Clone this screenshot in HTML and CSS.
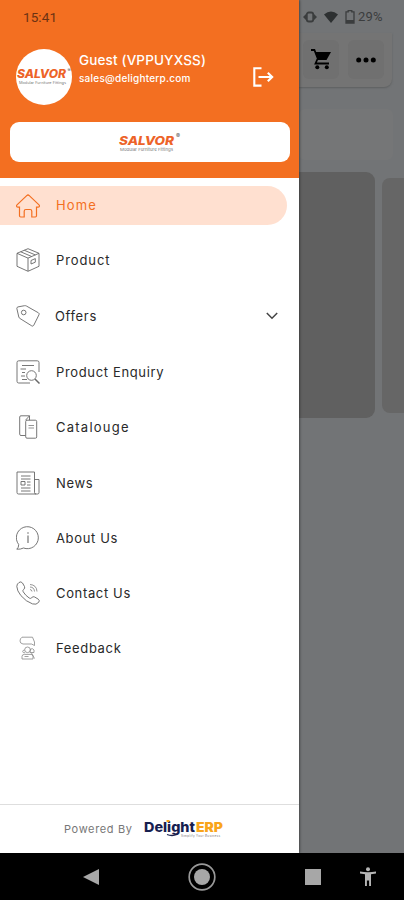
FILE: index.html
```
<!DOCTYPE html>
<html lang="en">
<head>
<meta charset="utf-8">
<meta name="viewport" content="width=device-width, initial-scale=1">
<title>Salvor</title>
<link rel="stylesheet" href="styles.css">
</head>
<body>
<div class="phone">
  <main class="screen">
    <div class="backdrop">
      <div class="status">
        <svg width="14" height="12" viewBox="0 0 14 12"><path d="M3.500 2.500 0 6l3.500 3.500M10.500 2.500 14 6l-3.500 3.500" fill="#3b3d3e"/><rect x="3.800" y="1.500" width="6.400" height="9" rx="2" fill="none" stroke="#3b3d3e" stroke-width="1.800"/></svg>
        <svg width="14" height="12" viewBox="0 0 14 12"><path d="M0 3.500Q7-2.500 14 3.500L7 12Z" fill="#2d3031"/></svg>
        <svg width="10" height="14" viewBox="0 0 10 14"><path d="M3.200 1.800V.7h3.600v1.100H9v11.400H1V1.800Z" fill="none" stroke="#3b3d3e" stroke-width="1.300"/><path d="M1 10h8v3H1z" fill="#3b3d3e"/></svg>
        <span>29%</span>
      </div>
      <div class="toolbar">
        <div class="tool"><svg width="20" height="21" viewBox="0 0 20 21"><path d="M0 1h3.400L7 10h7l3.500-6.500" fill="none" stroke="#000" stroke-width="1.800"/><path d="M4 3h16l-4.500 8H7z" fill="#000"/><path d="m6.500 10-2 4.500H18" fill="none" stroke="#000" stroke-width="1.800"/><circle cx="6.300" cy="18.300" r="2" fill="#000"/><circle cx="15.800" cy="18.300" r="2" fill="#000"/></svg></div>
        <div class="tool"><svg width="20" height="6" viewBox="0 0 20 6"><circle cx="2.700" cy="3" r="2.500"/><circle cx="10" cy="3" r="2.500"/><circle cx="17.300" cy="3" r="2.500"/></svg></div>
      </div>
      <div class="search"></div>
      <div class="slides"><div class="slide"></div><div class="slide next"></div></div>
    </div>
    <aside class="drawer">
      <header class="head">
        <time class="clock">15:41</time>
        <div class="profile">
          <div class="avatar">
            <svg width="56" height="20" viewBox="0 0 56 20"><text class="salvor" x="1" y="11" font-size="11.500" textLength="49" lengthAdjust="spacingAndGlyphs">SALVOR</text><text class="reg" x="51.500" y="4.500" font-size="5">®</text><text class="tag" x="3" y="16.500" font-size="3.500" textLength="47" lengthAdjust="spacingAndGlyphs">Modular Furniture Fittings</text></svg>
          </div>
          <div class="who"><strong>Guest (VPPUYXSS)</strong><span>sales@delighterp.com</span></div>
          <svg class="logout" width="22" height="20" viewBox="0 0 22 20"><path d="M9.500 1.200H2.300v17.400h7.200M6.500 10h13M15.800 5.700 20.200 10l-4.400 4.300" fill="none" stroke="#fff" stroke-width="2.100"/></svg>
        </div>
        <div class="brand">
          <svg width="64" height="22" viewBox="0 0 64 22"><text class="salvor" x="1" y="13.500" font-size="12" textLength="55" lengthAdjust="spacingAndGlyphs">SALVOR</text><text class="reg" x="58" y="6.500" font-size="6">®</text><text class="tag" x="2" y="19.800" font-size="4" textLength="53" lengthAdjust="spacingAndGlyphs">Modular Furniture Fittings</text></svg>
        </div>
      </header>
      <nav class="menu">
        <a class="item active"><svg viewBox="0 0 24 24"><path d="M3.500 13.200H2.100C.4 13.200.2 11.700 1 10.900L10.700 1.600q1.300-1.200 2.600 0L23 10.900c.8.800.6 2.300-1.100 2.300h-1.400v8.600q0 1.200-1.200 1.200h-3.500v-5.800q0-1.700-1.700-1.700h-4.200q-1.700 0-1.700 1.700V23H4.700q-1.200 0-1.200-1.200Z" stroke-width="1.200"/></svg><span class="t-home">Home</span></a>
        <a class="item"><svg viewBox="0 0 24 24"><path d="m12 .7 11 4.600v13L12 23.300 1 18.300v-13ZM1 5.300l11 4.800 11-4.800M12 10.100v13M4.700 3.800l11 4.700M8.300 2.300l11 4.600M15 12.500l4.300-1.900v3.600L15 16Z"/></svg><span class="t-product">Product</span></a>
        <a class="item offers"><svg viewBox="0 0 24 24"><path d="M.8 4.300Q.8 3.300 2 2.900L8.500 1.700q1-.2 1.900.3l12 6.800q1.200.7.600 1.900l-5.300 10.700q-.7 1.200-1.900.5L4 14.500q-.9-.5-1.200-1.500Z"/><circle cx="7.700" cy="8.500" r="2.300"/></svg><span class="t-offers">Offers</span><svg class="chev" viewBox="0 0 14 10"><path d="m1.800 2 5.200 5.200L12.200 2" stroke-width="1.500"/></svg></a>
        <a class="item"><svg viewBox="0 0 24 24"><path d="M23 12V2.500Q23 .8 21.300.8H2.700Q1 .8 1 2.500v18.800Q1 23 2.700 23H14M6 5.500h12M4.500 9H10M6 12.500h3M5 16h4M6 19.500h5"/><circle cx="15.500" cy="15.500" r="4.800"/><path d="m19 19 4.500 4.500" stroke-width="1.500"/></svg><span class="t-enquiry">Product Enquiry</span></a>
        <a class="item"><svg viewBox="0 0 24 24"><path d="M9.500 20.500H5q-1.300 0-1.300-1.300V2Q3.700.8 5 .8h8.500v4.400M9.500 5.200l4-4.400"/><rect x="9.700" y="5.200" width="11" height="18" rx="1.300"/><path d="M12.500 10.500h5.500M12.500 13h5.500" stroke-width=".7"/></svg><span class="t-cat">Catalouge</span></a>
        <a class="item"><svg viewBox="0 0 24 24"><path d="M18.500 1H1v20.500Q1 23 2.500 23h19q1.500 0 1.500-1.500V8.500h-4.500M18.500 1v20.500q0 1.500 1.500 1.500M5 5h9.500M5 8h9.500M11 11h3.500M11 14h3.500M5 17h9.500M5 20h9.500M5 10.500h4V14H5Z"/></svg><span class="t-news">News</span></a>
        <a class="item"><svg viewBox="0 0 24 24"><path d="M.8 23.200q2-1.600 1.900-4.700A11 11 0 1 1 7.500 22Q4.500 23.500.8 23.200Z"/><path d="M12 9.500V17M12 6.300v1.400" stroke-width="1.100"/></svg><span class="t-about">About Us</span></a>
        <a class="item"><svg viewBox="0 0 24 24"><path d="M3 1.500q2-1.500 3.500.5l2 3.500q.8 1.700-.8 2.900-1.400 1-.5 2.400 2.200 3.700 6 6.200 1.500 1 2.600-.4 1.100-1.500 2.900-.6l3.600 2.200q1.800 1.300.4 3.100-2.400 2.900-6.200 1.600Q10 20.700 4.900 14.600.9 9.700.8 5.400 1 2.700 3 1.500Z"/><path d="M14 8.500q1.800.2 2 2M14 6q4.200.2 4.500 4.500M14 3.500q6.600.4 7 7" stroke-width=".7"/></svg><span class="t-contact">Contact Us</span></a>
        <a class="item"><svg viewBox="0 0 24 24" class="faint"><path d="M6 1.200h10.500l2 4.800v3.500l-3-1.500H7Q4 7.500 4 5 4 2.500 6 1.200Z"/><circle cx="11.500" cy="13.800" r="2.800"/><path d="M8.700 14q-2 .1-2 1.500 0 1.500 2.300 1.300M14.500 13q2.500-1 3.500 1v2.500h-4ZM6 23v-2.600q0-2 2.500-2h6.500q2 0 2 2V23ZM8.500 20.500h4M15.500 17l3 5.500"/></svg><span class="t-feedback">Feedback</span></a>
      </nav>
      <footer class="foot">
        <span class="powered">Powered By</span>
        <svg width="82" height="20" viewBox="0 0 82 20"><text class="delight" x="1" y="13" font-size="13.500" textLength="51" lengthAdjust="spacingAndGlyphs">Delight</text><text class="erp" x="53" y="13" font-size="13" textLength="27" lengthAdjust="spacingAndGlyphs">ERP</text><path d="M24 15.500q5 2 10 0" fill="none" stroke="#17204f" stroke-width="1.300"/><path d="M23.500 2h3" stroke="#f9a51b" stroke-width="2"/><text class="tag" x="38" y="18" font-size="3" textLength="39">Simplify Your Business</text></svg>
      </footer>
    </aside>
  </main>
  <div class="system">
    <svg viewBox="0 0 16 18" width="16" height="18"><path d="M16 1v16L0 9Z" fill="#a7a7a7"/></svg>
    <svg viewBox="0 0 28 28" width="28" height="28"><circle cx="14" cy="14" r="12.800" fill="none" stroke="#999" stroke-width="1.700"/><circle cx="14" cy="14" r="8" fill="#a7a7a7"/></svg>
    <svg viewBox="0 0 16 16" width="16" height="16"><path d="M0 0h16v16H0z" fill="#a7a7a7"/></svg>
    <svg viewBox="0 0 16 19" width="16" height="19"><circle cx="8" cy="2.200" r="2" fill="#b5b5b5"/><path d="M0 4.500q8 1.500 16 0v1.900l-5 .8V19H9.100v-5.500H6.900V19H5V7.200l-5-.8Z" fill="#b5b5b5"/></svg>
  </div>
</div>
</body>
</html>
```

FILE: styles.css
```
* { box-sizing: border-box; }
body { margin: 0; font-family: Inter, "Noto Sans", sans-serif; }
svg { display: block; flex: none; }
.phone { width: 404px; height: 900px; display: flex; flex-direction: column; overflow: hidden; background: #000; }
.screen { position: relative; height: 853px; flex: none; overflow: hidden; background: #727476; }

.backdrop { height: 100%; padding-left: 299px; overflow: hidden; }
.status { height: 33px; display: flex; align-items: center; gap: 7px; padding-left: 4px; font: 13px Roboto, sans-serif; color: #3b3d3e; }
.status span { margin-left: -4px; letter-spacing: .2px; }
.toolbar { width: 93px; height: 54px; display: flex; gap: 9px; padding: 7px 0 0 4px; border-radius: 0 0 8px 0; background: #747474; box-shadow: 0 1px 2px #5d5f60; }
.tool { width: 36px; height: 39px; display: flex; align-items: center; justify-content: center; border-radius: 6px; background: #707070; }
.search { width: 94px; height: 51px; margin-top: 22px; border-radius: 6px; background: #757677; }
.slides { display: flex; align-items: center; gap: 7px; padding-top: 12px; }
.slide { flex: none; width: 76px; height: 246px; border-radius: 0 9px 9px 0; background: #606060; }
.slide.next { width: 30px; height: 235px; border-radius: 8px 0 0 8px; background: #666; }

.drawer { position: absolute; inset: 0 auto 0 0; width: 299px; display: flex; flex-direction: column; background: #fff; box-shadow: 0 0 3px #222; }
.head { height: 178px; flex: none; padding: 9px 9px 0 10px; background: #f36f21; }
.clock { display: block; height: 16px; padding-left: 13px; font: 13.5px/16px Roboto, sans-serif; letter-spacing: .1px; color: #6b3213; }
.profile { display: flex; height: 56px; margin-top: 24px; padding-left: 6px; }
.avatar { width: 56px; height: 56px; display: flex; align-items: center; border-radius: 50%; background: #fff; overflow: hidden; }
.who { flex: 1; padding: 1px 0 0 7px; display: flex; flex-direction: column; color: #fff; white-space: nowrap; }
.who strong { font-size: 13.5px; line-height: 20px; font-weight: 500; letter-spacing: .15px; }
.who span { font-size: 10px; line-height: 16px; font-weight: 500; letter-spacing: .23px; }
.logout { margin: 18px 16px 0 0; }
.brand { height: 40px; margin-top: 17px; display: flex; align-items: center; justify-content: center; border-radius: 9px; background: #fff; }
.salvor { font-family: Inter, sans-serif; font-weight: 800; font-style: italic; fill: #ed6328; }
.reg { fill: #555; }
.tag { fill: #777; }

.menu { flex: 1; padding-top: 8px; }
.item { height: 55.3px; display: flex; align-items: center; padding-left: 16px; font-size: 13px; line-height: 20px; color: #292929; }
.item svg { width: 24px; height: 24px; margin-right: 16px; fill: none; stroke: #686868; stroke-width: .9; }
.item span { white-space: nowrap; letter-spacing: .65px; }
.item .faint { stroke: #888; stroke-width: .8; }
.item.active { width: 287px; height: 39px; margin-bottom: 7px; border-radius: 0 20px 20px 0; background: #ffe0d0; color: #f36f21; }
.item.active svg { stroke: #f36f21; }
.item.active span { letter-spacing: 1.1px; margin-top: -1px; }
.item.offers { height: 57px; }
.item .chev { width: 14px; height: 10px; margin: 0 20px 0 auto; stroke: #444; }
.item .t-offers { margin-left: -1px; }
.item .t-product { letter-spacing: .9px; }
.item .t-cat { letter-spacing: 1.25px; }

.foot { height: 49px; flex: none; display: flex; align-items: center; gap: 10px; padding-left: 64px; border-top: 1px solid #dedede; }
.powered { width: 69px; font-size: 11px; letter-spacing: .65px; color: #777; white-space: nowrap; }
.delight { font-weight: 800; fill: #17204f; }
.erp { font-weight: 900; fill: #f9a51b; }
.system { height: 47px; display: flex; align-items: center; padding-left: 83px; }
.system svg:nth-child(2) { margin-left: 89px; }
.system svg:nth-child(3) { margin-left: 89px; }
.system svg:nth-child(4) { margin-left: 39px; }
```
